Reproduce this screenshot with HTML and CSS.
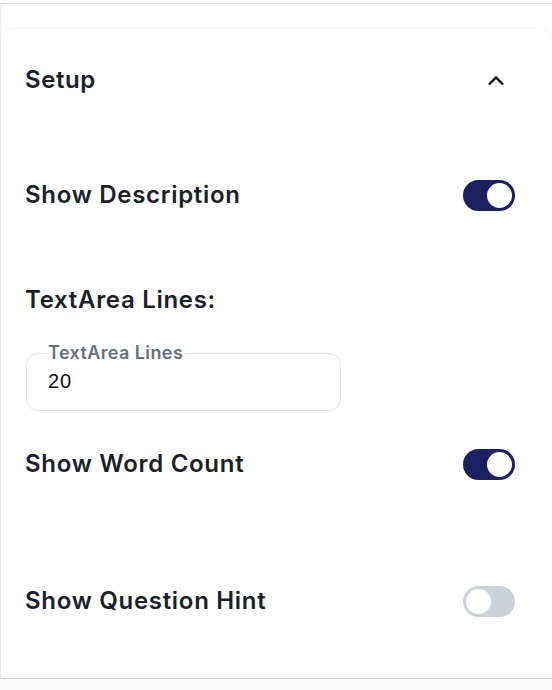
FILE: index.html
```html
<!DOCTYPE html>
<html>
<head>
<meta charset="utf-8">
<link rel="stylesheet" href="styles.css">
</head>
<body>
<div class="page">
  <div class="card">
    <div class="header">
      <span class="title">Setup</span>
      <svg class="chev" width="20" height="14" viewBox="0 0 20 14"><path d="M3 11.5 L10 4.5 L17 11.5" fill="none" stroke="#111" stroke-width="2.4"/></svg>
    </div>
    <div class="body">
      <div class="row r1">
        <span class="label">Show Description</span>
        <span class="toggle on"><span class="knob"></span></span>
      </div>
      <div class="section">
        <div class="label slabel">TextArea Lines:</div>
        <div class="field">
          <span class="legend">TextArea Lines</span>
          <div class="value">20</div>
        </div>
      </div>
      <div class="row r2">
        <span class="label">Show Word Count</span>
        <span class="toggle on"><span class="knob"></span></span>
      </div>
      <div class="row r3">
        <span class="label">Show Question Hint</span>
        <span class="toggle off"><span class="knob"></span></span>
      </div>
    </div>
  </div>
</div>
</body>
</html>
```
FILE: styles.css
```css
html, body {
  margin: 0;
  padding: 0;
  background: #fafafa;
  font-family: "Inter", "Noto Sans", sans-serif;
  color: #1b1f2b;
}
.page {
  margin-top: 3px;
  border-top: 1px solid #dcdcdc;
  border-left: 1px solid #ececec;
  border-bottom: 1px solid #d6d6d6;
  background: #fff;
  height: 676px;
  padding-top: 24px;
  box-sizing: border-box;
  box-shadow: 0 1px 2px rgba(0,0,0,0.08);
}
.card {
  border-radius: 14px 14px 0 0;
  box-shadow: 0 -1px 3px rgba(0,0,0,0.035);
  border-top: 1px solid #f4f4f4;
  height: 100%;
  box-sizing: border-box;
}
.header {
  display: flex;
  justify-content: space-between;
  align-items: center;
  padding: 0 46px 0 24px;
  height: 101px;
}
.title {
  font-size: 24px;
  font-weight: 600;
  line-height: 30px;
  letter-spacing: 0.6px;
}
.chev { display: block; }
.body {
  padding: 0 37px 0 24px;
}
.label {
  font-size: 24px;
  font-weight: 600;
  line-height: 30px;
  letter-spacing: 0.7px;
}
.row {
  display: flex;
  justify-content: space-between;
  align-items: center;
  height: 32px;
}
.r1 { margin-top: 49px; }
.section { margin-top: 74px; }
.r2 { margin-top: 37px; }
.r3 { margin-top: 105px; }
.toggle {
  width: 52px;
  height: 31px;
  border-radius: 16px;
  box-sizing: border-box;
  display: flex;
  align-items: center;
  padding: 3px;
}
.toggle.on { background: #1b2060; justify-content: flex-end; }
.toggle.off { background: #cdd2da; justify-content: flex-start; }
.knob {
  width: 25px;
  height: 25px;
  border-radius: 50%;
  background: #fff;
}
.field {
  margin: 38px 0 0 1px;
  width: 315px;
  height: 58px;
  box-sizing: border-box;
  border: 1px solid #e3e5e8;
  border-radius: 12px;
  padding: 0 21px;
  position: relative;
}
.legend {
  position: absolute;
  left: 19px;
  top: -10px;
  background: #fff;
  padding: 0 2px;
  font-size: 18px;
  font-weight: 600;
  color: #64708a;
  line-height: 18px;
  letter-spacing: 0.4px;
}
.value {
  font-family: "Liberation Sans", sans-serif;
  font-size: 20px;
  margin-top: 16px;
  line-height: 22px;
  letter-spacing: 1px;
  color: #111;
}
```
